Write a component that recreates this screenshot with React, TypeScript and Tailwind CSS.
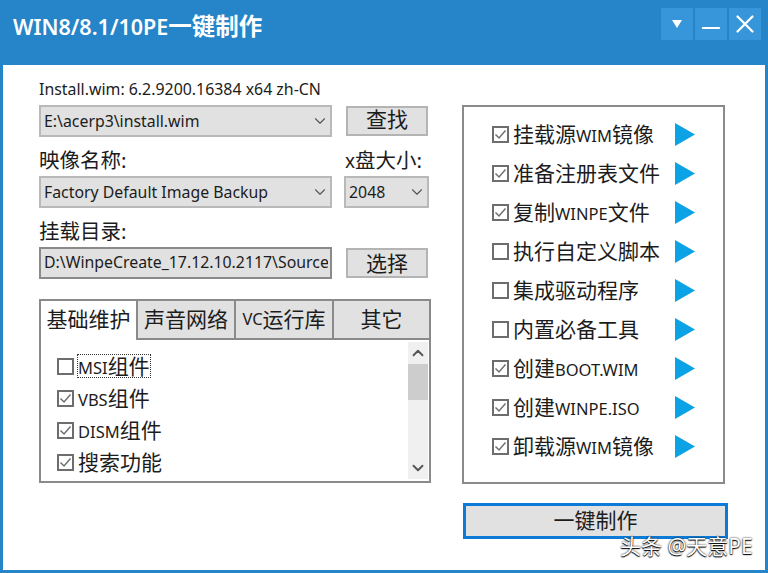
import { ChevronDown, ChevronUp, Minus, X } from "lucide-react";

const UI_FONT = "font-['Noto_Sans','Noto_Sans_CJK_SC',sans-serif]";

const Tick = ({ checked }: { checked: boolean }) => (
  <span className="w-[17px] h-[17px] shrink-0 border-2 border-[#6d6d6d] bg-white flex items-center justify-center">
    {checked && (
      <svg width="13" height="13" viewBox="0 0 13 13" fill="none" stroke="#707070" strokeWidth="1.5">
        <path d="M1.5 6.5 L5 10 L11.5 2.5" />
      </svg>
    )}
  </span>
);

// latin bits in these labels render a size smaller than the chinese
const Label = ({ parts }: { parts: string[] }) => (
  <span className="text-[21px] leading-none text-[#1c1c1c] whitespace-nowrap">
    {parts.map((p, i) =>
      /^[A-Z.]+$/.test(p) ? (
        <span key={i} className="text-[16.5px]">{p}</span>
      ) : (
        <span key={i}>{p}</span>
      )
    )}
  </span>
);

const Combo = ({ text, className }: { text: string; className: string }) => (
  <div className={`h-[32px] flex items-center justify-between bg-[#e1e1e1] border-2 border-[#b9b9b9] pl-[3px] pr-[1px] ${className}`}>
    <span className="pt-[2px] text-[15.85px] text-[#1c1c1c] whitespace-nowrap">{text}</span>
    <ChevronDown size={18} strokeWidth={1.5} color="#555555" />
  </div>
);

const SideButton = ({ text, className }: { text: string; className: string }) => (
  <button className={`w-[82px] h-[30px] bg-[#e1e1e1] border-2 border-[#b4b4b4] text-[21px] leading-none text-[#1c1c1c] ${className}`}>
    {text}
  </button>
);

const steps = [
  { parts: ["挂载源", "WIM", "镜像"], on: true },
  { parts: ["准备注册表文件"], on: true },
  { parts: ["复制", "WINPE", "文件"], on: true },
  { parts: ["执行自定义脚本"], on: false },
  { parts: ["集成驱动程序"], on: false },
  { parts: ["内置必备工具"], on: false },
  { parts: ["创建", "BOOT.WIM"], on: true },
  { parts: ["创建", "WINPE.ISO"], on: true },
  { parts: ["卸载源", "WIM", "镜像"], on: true },
];

export default function App() {
  return (
    <div className={`relative w-[768px] h-[573px] bg-[#2585c8] flex flex-col overflow-hidden ${UI_FONT}`}>
      {/* Title bar */}
      <header className="h-[65px] shrink-0 flex items-start justify-between pl-[13px] pr-[7px]">
        <h1 className="mt-[10px] text-[21.5px] leading-[32px] font-semibold text-white whitespace-nowrap">
          WIN8/8.1/10PE<span className="text-[23.5px]">一键制作</span>
        </h1>
        <div className="flex gap-[2px] mt-[8px]">
          <div className="w-[32px] h-[32px] bg-[#3696d9] flex items-center justify-center">
            <svg width="10" height="8" viewBox="0 0 10 8"><path d="M0 0h10L5 8z" fill="#fff" /></svg>
          </div>
          <div className="w-[32px] h-[32px] bg-[#3696d9] flex items-center justify-center">
            <Minus size={28} strokeWidth={1.8} color="#fff" className="translate-y-[4px]" />
          </div>
          <div className="w-[32px] h-[32px] bg-[#3696d9] flex items-center justify-center">
            <X size={30} strokeWidth={1.8} color="#fff" />
          </div>
        </div>
      </header>

      {/* Body */}
      <main className="flex-1 ml-[3px] mr-[3px] mb-[3px] bg-white flex pl-[36px] pt-[14px]">
        {/* Left column */}
        <section className="w-[392px] shrink-0 flex flex-col">
          <p className="h-[20px] mb-[6px] text-[15.9px] leading-[20px] text-[#1c1c1c] whitespace-nowrap">Install.wim: 6.2.9200.16384 x64 zh-CN</p>

          <div className="flex items-center justify-between pr-[3px]">
            <Combo text="E:\acerp3\install.wim" className="w-[293px]" />
            <SideButton text="查找" className="pb-[3px]" />
          </div>

          <div className="flex h-[39px] pt-[7px] items-center justify-between text-[20.5px] text-[#1c1c1c]">
            <span>映像名称:</span>
            <span className="whitespace-nowrap mr-[9px]"><span className="text-[19px]">x</span>盘大小:</span>
          </div>

          <div className="flex items-center justify-between pr-[2px]">
            <Combo text="Factory Default Image Backup" className="w-[293px]" />
            <Combo text="2048" className="w-[85px]" />
          </div>

          <div className="h-[39px] pt-[7px] flex items-center text-[20.5px] text-[#1c1c1c]">挂载目录:</div>

          <div className="flex items-center justify-between pr-[3px]">
            <div className="w-[293px] h-[32px] border-2 border-[#8a8a8a] bg-[#e1e1e1] pl-[3px] pr-[2px] flex items-center overflow-hidden">
              <span className="text-[15.85px] text-[#1c1c1c] whitespace-nowrap overflow-hidden">D:\WinpeCreate_17.12.10.2117\Source</span>
            </div>
            <SideButton text="选择" className="pt-[1px]" />
          </div>

          {/* Tabs */}
          <div className="mt-[20px] h-[184px] border-2 border-[#8a8a8a] flex flex-col">
            <div className="h-[39px] shrink-0 flex text-[21px] leading-none text-[#1c1c1c]">
              <div className="w-[97px] pb-[2px] bg-white border-r-2 border-[#8a8a8a] flex items-center justify-center whitespace-nowrap">基础维护</div>
              <div className="w-[98px] bg-[#e1e1e1] border-r-2 border-b-2 border-[#8a8a8a] flex items-center justify-center whitespace-nowrap">声音网络</div>
              <div className="w-[98px] bg-[#e1e1e1] border-r-2 border-b-2 border-[#8a8a8a] flex items-center justify-center whitespace-nowrap"><span className="text-[16.5px]">VC</span>运行库</div>
              <div className="flex-1 bg-[#e1e1e1] border-b-2 border-[#8a8a8a] flex items-center justify-center">其它</div>
            </div>
            <div className="flex-1 flex justify-between pt-[2px] pr-[1px]">
              <div className="pl-[16px] pt-[15px] flex flex-col gap-[14.3px]">
                <div className="h-[18px] flex items-center gap-[3px]">
                  <Tick checked={false} />
                  <span className="border border-dotted border-[#333333] h-[24px] flex items-center">
                    <Label parts={["MSI", "组件"]} />
                  </span>
                </div>
                <div className="h-[18px] flex items-center gap-[4px]"><Tick checked /><Label parts={["VBS", "组件"]} /></div>
                <div className="h-[18px] flex items-center gap-[4px]"><Tick checked /><Label parts={["DISM", "组件"]} /></div>
                <div className="h-[18px] flex items-center gap-[4px]"><Tick checked /><Label parts={["搜索功能"]} /></div>
              </div>
              <div className="w-[20px] h-[137px] bg-[#f0f0f0] flex flex-col items-center justify-between">
                <div className="w-full flex flex-col">
                  <div className="h-[22px] flex items-center justify-center"><ChevronUp size={18} strokeWidth={2.5} color="#555555" /></div>
                  <div className="h-[36px] bg-[#cdcdcd]" />
                </div>
                <div className="h-[22px] flex items-center justify-center"><ChevronDown size={18} strokeWidth={2.5} color="#555555" /></div>
              </div>
            </div>
          </div>
        </section>

        {/* Right column */}
        <section className="w-[265px] ml-[31px] mt-[26px] shrink-0 flex flex-col">
          <div className="w-[263px] h-[379px] border-2 border-[#8a8a8a] pl-[28px] pr-[28px] pt-[8px] flex flex-col">
            {steps.map((s) => (
              <div key={s.parts.join("")} className="h-[39px] shrink-0 flex items-center justify-between">
                <div className="flex items-center gap-[4px]">
                  <Tick checked={s.on} />
                  <Label parts={s.parts} />
                </div>
                <svg width="20" height="23" viewBox="0 0 20 23"><path d="M0 0 L20 11.5 L0 23z" fill="#0ba2e6" /></svg>
              </div>
            ))}
          </div>
          <button className="mt-[19px] ml-[1px] w-[265px] h-[36px] pb-[2px] bg-[#e1e1e1] border-[3px] border-[#0c7bd8] text-[21px] leading-none text-[#1c1c1c]">
            一键制作
          </button>
        </section>
      </main>

      {/* Watermark */}
      <span className="absolute left-[620px] top-[533px] text-[21px] leading-[26px] text-white whitespace-nowrap [text-shadow:0_0_2px_#000,0_1px_1px_#000]">
        头条 @天意PE
      </span>
    </div>
  );
}
